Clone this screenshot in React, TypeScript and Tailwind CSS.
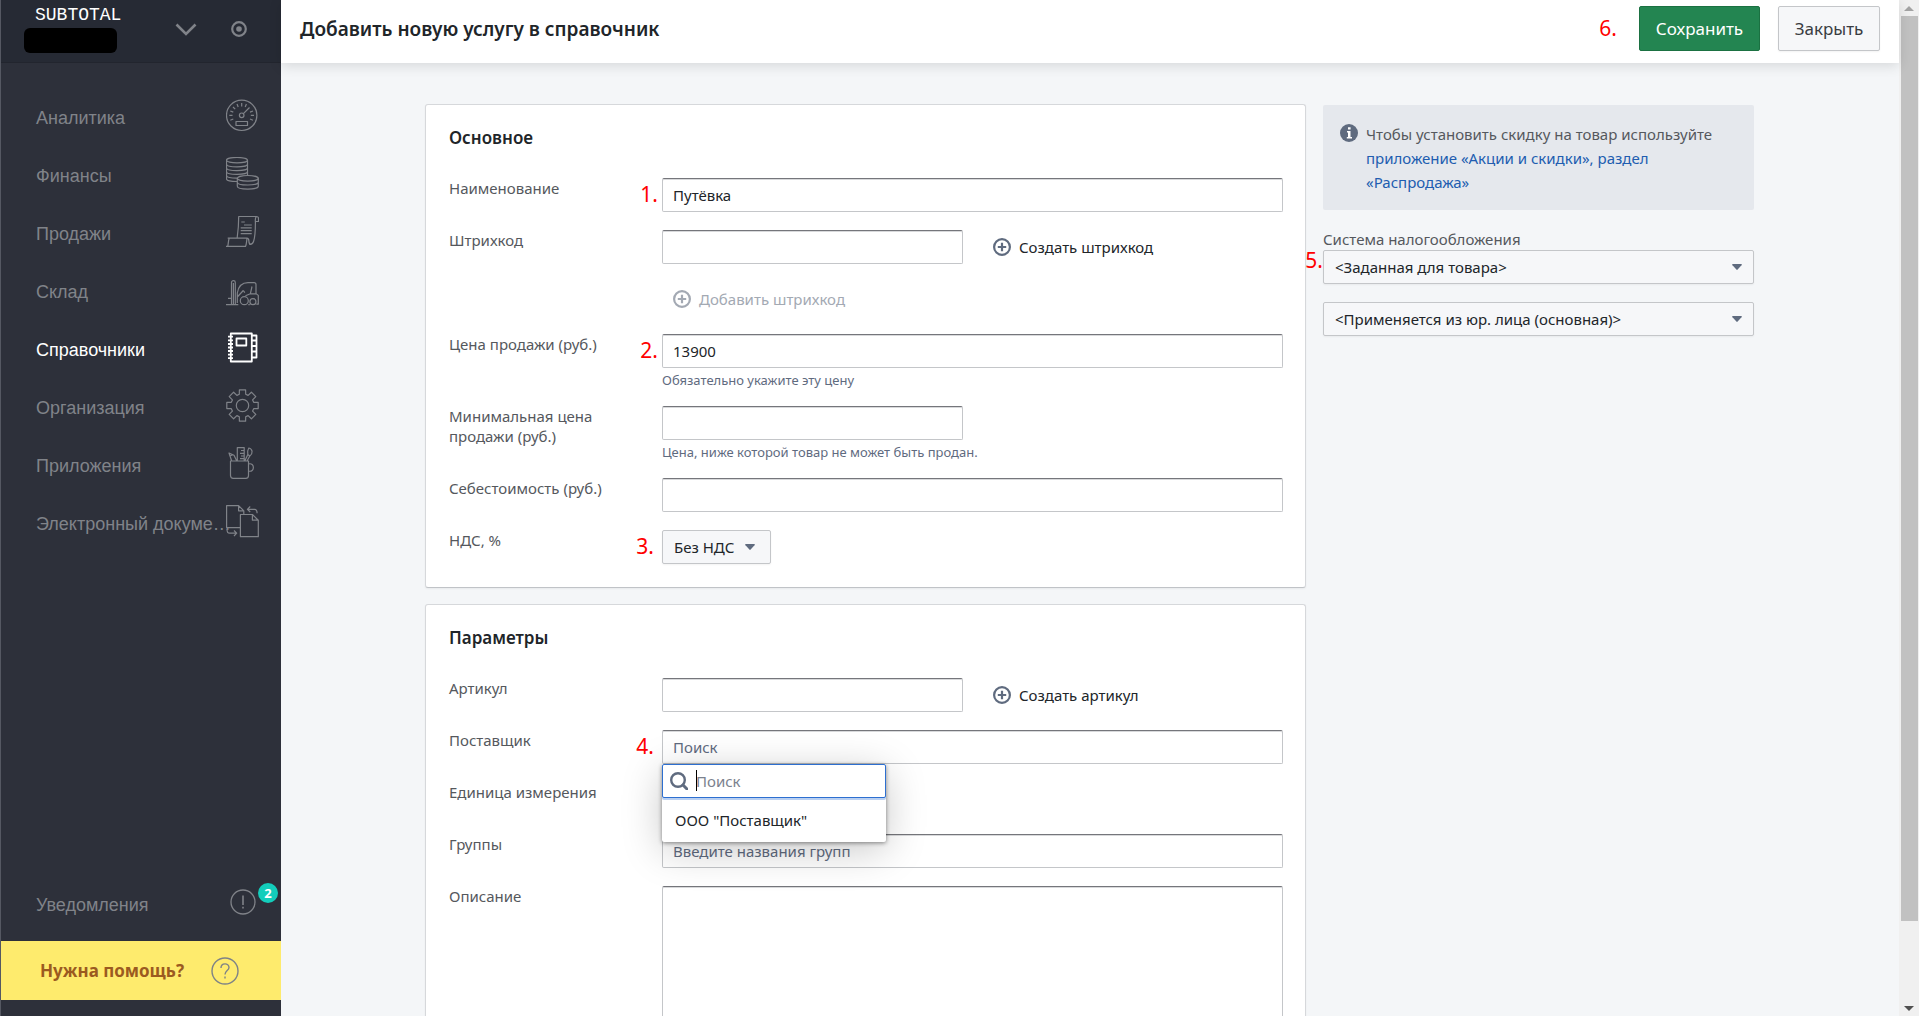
import { useState } from 'react';
import type { ReactNode } from 'react';
import clsx from 'clsx';

const gearPath =
  Array.from({ length: 8 }, (_, i) => i * 45)
    .flatMap((deg) => [
      [11.6, deg - 16],
      [16, deg - 11],
      [16, deg + 11],
      [11.6, deg + 16],
    ])
    .map(([r, deg], i) => {
      const a = (deg * Math.PI) / 180;
      return `${i ? 'L' : 'M'}${(16.5 + r * Math.sin(a)).toFixed(1)} ${(16.5 - r * Math.cos(a)).toFixed(1)}`;
    })
    .join('') + 'Z';

function NavIcon({ children, bold }: { children: ReactNode; bold?: boolean }) {
  return (
    <svg
      className="-ml-1.5 w-[33px] h-[33px] shrink-0"
      viewBox="0 0 33 33"
      fill="none"
      stroke="currentColor"
      strokeWidth={bold ? 1.8 : 1.2}
      strokeLinejoin="round"
    >
      {children}
    </svg>
  );
}

const navItems = [
  {
    title: 'Аналитика',
    icon: (
      <>
        <circle cx="15.7" cy="16.3" r="15.2" />
        <circle cx="15.7" cy="16.3" r="2.3" />
        <path d="M17.4 14.6L23.5 8.5M10 22.5h11.5v4H10zM15.7 4v3.4M11 5l1.2 3M20.4 5l-1.2 3M7 8l2.2 2.2M4.3 12l3 1.1M27 12l-3 1.1M3.3 16.3h3.2M28 16.3h-3.2M4.3 21.2l3-1.2M27 21.2l-3-1.2" />
      </>
    ),
  },
  {
    title: 'Финансы',
    icon: (
      <>
        <ellipse cx="11" cy="3.2" rx="10.5" ry="2.7" />
        <path d="M.5 3.2v18.6c0 1.6 4.5 2.7 10.5 2.7M21.5 3.2V18" />
        <path d="M.5 7.2c0 1.6 4.7 2.7 10.5 2.7s10.5-1.1 10.5-2.7M.5 11c0 1.6 4.7 2.7 10.5 2.7s10.5-1.1 10.5-2.7M.5 14.7c0 1.6 4.7 2.7 10.5 2.7s10.5-1.1 10.5-2.7M.5 18.4c0 1.6 4.7 2.7 10.5 2.7" />
        <ellipse cx="21.8" cy="21.3" rx="10.5" ry="2.8" />
        <path d="M11.3 21.3v8c0 1.7 4.7 2.8 10.5 2.8s10.5-1.1 10.5-2.8v-8M11.3 25.2c0 1.7 4.7 2.8 10.5 2.8s10.5-1.1 10.5-2.8" />
      </>
    ),
  },
  {
    title: 'Продажи',
    icon: (
      <path d="M11.2 22.5C12.3 15 12.7 9 12.7 1.5h17.8c1.4 0 2 .9 2 2v3h-3.2M30.5 1.500c-1.800 1-1.100 4-1.100 6.500 0 7-.2 13-1.700 18-.8 3-2.200 3.500-4.500 3.500M1.700 23.200h19.200c1.500 0 2 1.300 2 3s.2 3.300 2.500 3.300M3.200 23.200c-1 2.500-.8 6-1.500 8.200M0 31.400h19.500c1.200-2 .9-5.500 1.600-8.200M15.300 7h3.500M18 10h7.800M14.700 12.800h11M14.700 15.700h11M14.700 18.600h11" />
    ),
  },
  {
    title: 'Склад',
    icon: (
      <>
        <path d="M5.500 31.500V9.500c0-2.500 3.800-2.500 3.800 0v22M7.400 10v21M0 31.700h12.300M2 25.300h3.500M11.300 30V20C12.500 13 16 9.700 22 9.700h6c1.200 0 2 .7 2 1.900v9l2.300 1.800v8.800h-2M11.300 24l6-6.500M17.300 17.500l1.500 2.200M26 13.500l-1.600 7.200-5 2M24.400 20.800h5.800M22.300 31.700h1.500" />
        <circle cx="18.3" cy="27.7" r="4" />
        <circle cx="26.9" cy="28.7" r="3" />
      </>
    ),
  },
  {
    title: 'Справочники',
    active: true,
    icon: (
      <path d="M4.800 2.500h21v28h-21zM10.500 7.500h9.800v7h-9.800zM26 4.500h4.500v5H26M30.500 9.500v17H26M26 15h4.500M26 20.500h4.500M2 5.700h5M2 9.300h5M2 13h5M2 16.500h5M2 20h5M2 23.600h5M2 27.200h5" />
    ),
  },
  {
    title: 'Организация',
    icon: (
      <>
        <circle cx="16.5" cy="16.5" r="6.2" />
        <path d={gearPath} />
      </>
    ),
  },
  {
    title: 'Приложения',
    icon: (
      <path d="M4.500 14h18v14.500c0 1.700-1 2.800-2.700 2.800H7.200c-1.700 0-2.700-1.100-2.700-2.800zM22.500 17c6.500-2 6.500 9 0 7M11.300 14V.6h6.900V14M15 3.500h3M14 6.300h4M15 9h3M14 11.700h4M5.700 14L3 6l5 2.200 2.800 5.800M3.500 9.200l3.300-1.500M18.800 14l3-6.500M21 14l2.800-5M21.800 7.500c-.4-2.500-.3-4.500 1-6.500 4 1 4.400 5.500 1 8z" />
    ),
  },
  {
    title: 'Электронный докуме…',
    icon: (
      <path d="M14 22.600H.6V.6h12l5.200 5.200V9M12.600.6v5.200h5.200M14.400 9.500h12l5.900 5.700v16.500H14.400zM26.400 9.500v5.700h5.900M24.200 1.500l-2.800 2.800 2.800 2.700M21.400 4.300h7.200c1.700 0 2.500 1.200 2.500 4M1 24.200c0 2.500.6 4 2.500 4h7.200M8 25.500l2.700 2.700L8 31" />
    ),
  },
];

function PlusCircle() {
  return (
    <svg className="w-[18px] h-[18px]" viewBox="0 0 18 18" fill="none" stroke="currentColor" strokeWidth="2.2">
      <circle cx="9" cy="9" r="7.9" />
      <path d="M9 4.800v8.400M4.800 9h8.400" />
    </svg>
  );
}

const boxClass =
  'block w-full rounded-xs border border-[#c4c6c9] border-t-[#75767b] bg-white px-[10px] text-[15px] text-[#212529] placeholder:text-[#5f6b7f] shadow-[inset_0_1px_0_#d8d9db] outline-none';
const inputClass = clsx(boxClass, 'h-[34px]');

interface FieldProps {
  id: string;
  label: string;
  mark?: string;
  markClass?: string;
  hint?: string;
  children?: ReactNode;
}

function Field({ id, label, mark, markClass, hint, children }: FieldProps) {
  return (
    <div className="flex mb-[18px] min-h-[34px]">
      <label htmlFor={id} className="w-[213px] shrink-0 pr-10 text-[15px] leading-5 text-[#55585d]">
        {label}
      </label>
      <div className="relative flex-1 min-w-0">
        {mark && <Mark className={clsx('absolute right-full top-0.5', markClass)}>{mark}</Mark>}
        {children}
        {hint && <p className="h-5 pt-0.5 text-[13px] leading-5 text-[#5f6b7f] whitespace-nowrap">{hint}</p>}
      </div>
    </div>
  );
}

function Mark({ className, children }: { className?: string; children: ReactNode }) {
  return <span className={clsx('text-[21px] leading-7 text-[#ff0000]', className)}>{children}</span>;
}

interface SelectProps {
  id: string;
  label?: string;
  value: string;
  className?: string;
  arrowClass?: string;
}

function Select({ id, label, value, className, arrowClass = 'right-3' }: SelectProps) {
  return (
    <div className={clsx('relative', className)}>
      <select
        id={id}
        aria-label={label}
        className="block h-[34px] w-full appearance-none rounded-xs border border-[#c4c6c9] bg-[#f6f7f9] pl-[11px] pr-7 text-[15px] text-[#212529] shadow-xs"
      >
        <option>{value}</option>
      </select>
      <svg
        className={clsx('pointer-events-none absolute top-3.5 w-2.5 h-1.5', arrowClass)}
        viewBox="0 0 10 6"
        fill="#5f6b7f"
      >
        <path d="M1 0h8c.8 0 1 .6.500 1.200L5.600 5.600c-.4.400-.8.400-1.200 0L.5 1.200C0 .6.200 0 1 0z" />
      </svg>
    </div>
  );
}

function Card({ title, children }: { title: string; children: ReactNode }) {
  return (
    <section className="mb-4 rounded-[3px] border border-[#d6d8db] border-b-[#c0c3c7] bg-white pl-[23px] pr-[22px] pt-[21px] pb-[5px] shadow-xs">
      <h2 className="mb-7 text-[17px] leading-6 font-semibold text-[#212529]">{title}</h2>
      {children}
    </section>
  );
}

function CreateButton({ children }: { children: ReactNode }) {
  return (
    <button type="button" className="ml-[30px] flex shrink-0 items-center gap-2 text-[15px]">
      <span className="text-[#5f6b7f]">
        <PlusCircle />
      </span>
      {children}
    </button>
  );
}

function Sidebar() {
  return (
    <aside className="flex w-[281px] shrink-0 flex-col border-l border-[#555862] bg-[#2d303a] text-[#808389]">
      <div className="flex h-[63px] shrink-0 items-center border-b border-[#22252e] bg-[#262a34] pb-1 pl-[23px]">
        <div className="w-[93px] self-start pt-1.5">
          <div className="pl-[11px] font-['Liberation_Mono',monospace] text-lg leading-[18px] text-white">SUBTOTAL</div>
          <div className="mt-1 h-[25px] rounded-md bg-black" />
        </div>
        <button type="button" aria-label="Выбрать компанию" className="ml-[58px]">
          <svg className="w-[22px] h-[13px]" viewBox="0 0 22 13" fill="none" stroke="currentColor" strokeWidth="2.6">
            <path d="M1.500 1.500L11 11l9.500-9.500" />
          </svg>
        </button>
        <button type="button" aria-label="Статус" className="ml-[34px]">
          <svg className="w-4 h-4" viewBox="0 0 16 16" fill="none" stroke="currentColor" strokeWidth="2.2">
            <circle cx="8" cy="8" r="6.8" />
            <circle cx="8" cy="8" r="2.8" fill="currentColor" stroke="none" />
          </svg>
        </button>
      </div>

      <nav className="pt-[23px] font-['Liberation_Sans',Arial,sans-serif] text-lg">
        {navItems.map((item) => (
          <a
            key={item.title}
            href="#"
            className={clsx('flex h-[58px] items-center pl-[35px]', item.active && 'text-white')}
          >
            <span className="w-[196px] shrink-0 whitespace-nowrap pt-1.5">{item.title}</span>
            <NavIcon bold={item.active}>{item.icon}</NavIcon>
          </a>
        ))}
      </nav>

      <a
        href="#"
        className="mt-auto mb-[10px] flex h-[58px] shrink-0 items-center pl-[35px] font-['Liberation_Sans',Arial,sans-serif] text-lg"
      >
        <span className="w-[194px] shrink-0 pt-1.5">Уведомления</span>
        <span className="relative">
          <svg className="w-[26px] h-[26px]" viewBox="0 0 26 26" fill="none" stroke="currentColor" strokeWidth="1.3">
            <circle cx="13" cy="13" r="12" />
            <path d="M13 6.500v9.500M13 17.800v1.800" strokeWidth="1.6" />
          </svg>
          <span className="absolute left-[28px] -top-1.5 flex h-5 w-5 items-center justify-center rounded-full bg-[#13cdbb] font-['Noto_Sans',sans-serif] text-[13px] font-bold text-white">
            2
          </span>
        </span>
      </a>
      <a href="#" className="mb-4 flex h-[59px] shrink-0 items-center bg-[#feeb6d] pl-[39px] text-[#9b5a20]">
        <span className="w-[171px] text-[17px] font-bold">Нужна помощь?</span>
        <svg className="w-7 h-7" viewBox="0 0 28 28" fill="none" stroke="#7f8386" strokeWidth="1.4">
          <circle cx="14" cy="14" r="13" />
          <path d="M10 11c0-5.500 8-5.300 8-.6 0 3.100-4 3.200-4 7.100M14 19.500v2" />
        </svg>
      </a>
    </aside>
  );
}

function Scrollbar() {
  return (
    <div className="flex w-5 shrink-0 flex-col items-center bg-[#f0f0f0]" aria-hidden="true">
      <div className="flex h-4 items-center">
        <div className="border-x-[5px] border-b-[5px] border-x-transparent border-b-[#a3a3a3]" />
      </div>
      <div className="flex-1 w-full">
        <div className="mx-auto h-[92%] w-[17px] bg-[#c1c1c1]" />
      </div>
      <div className="flex h-4 items-center">
        <div className="border-x-[5px] border-t-[5px] border-x-transparent border-t-[#505050]" />
      </div>
    </div>
  );
}

export default function App() {
  const [name, setName] = useState('Путёвка');
  const [price, setPrice] = useState('13900');

  return (
    <div className="flex h-screen overflow-hidden bg-[#f4f6f8] font-['Noto_Sans',sans-serif] text-[#212529]">
      <Sidebar />

      <div className="flex flex-1 min-w-0 flex-col">
        <header className="relative flex h-[63px] shrink-0 items-start bg-white px-[19px] pt-1.5 shadow-[0_3px_12px_rgba(0,0,0,0.12)]">
          <h1 className="flex-1 text-[19px] leading-[46px] font-semibold">Добавить новую услугу в справочник</h1>
          <Mark className="mr-[22px] pt-2">6.</Mark>
          <button
            type="button"
            className="mr-[18px] h-[45px] w-[121px] rounded-xs border border-[#1b7142] bg-[#238551] text-[17px] text-white"
          >
            Сохранить
          </button>
          <button
            type="button"
            className="h-[45px] w-[102px] rounded-xs border border-[#c4c6c9] bg-[#f6f7f9] text-[17px] text-[#3a3d42] shadow-xs"
          >
            Закрыть
          </button>
        </header>

        <main className="min-h-0 flex-1 overflow-hidden pl-6 pr-[25px] pt-[41px]">
          <div className="mx-auto flex max-w-[1329px] gap-[17px]">
            <form className="flex-1 min-w-0">
              <Card title="Основное">
                <Field id="name" label="Наименование" mark="1." markClass="mr-1">
                  <input id="name" className={inputClass} value={name} onChange={(e) => setName(e.target.value)} />
                </Field>
                <Field id="barcode" label="Штрихкод">
                  <div className="flex items-center">
                    <input id="barcode" className={clsx(inputClass, 'max-w-[301px]')} />
                    <CreateButton>Создать штрихкод</CreateButton>
                  </div>
                  <button
                    type="button"
                    disabled
                    className="mt-[18px] ml-[11px] flex h-[34px] items-center gap-2 text-[15px] text-[#a3a9b3]"
                  >
                    <PlusCircle />
                    Добавить штрихкод
                  </button>
                </Field>
                <Field id="price" label="Цена продажи (руб.)" mark="2." markClass="mr-1" hint="Обязательно укажите эту цену">
                  <input id="price" className={inputClass} value={price} onChange={(e) => setPrice(e.target.value)} />
                </Field>
                <Field
                  id="min-price"
                  label="Минимальная цена продажи (руб.)"
                  hint="Цена, ниже которой товар не может быть продан."
                >
                  <input id="min-price" className={clsx(inputClass, 'max-w-[301px]')} />
                </Field>
                <Field id="cost" label="Себестоимость (руб.)">
                  <input id="cost" className={inputClass} />
                </Field>
                <Field id="vat" label="НДС, %" mark="3." markClass="mr-2">
                  <Select id="vat" value="Без НДС" className="w-[109px]" arrowClass="right-4" />
                </Field>
              </Card>

              <Card title="Параметры">
                <Field id="sku" label="Артикул">
                  <div className="flex items-center">
                    <input id="sku" className={clsx(inputClass, 'max-w-[301px]')} />
                    <CreateButton>Создать артикул</CreateButton>
                  </div>
                </Field>
                <Field id="supplier" label="Поставщик" mark="4." markClass="mr-2">
                  <input id="supplier" className={inputClass} placeholder="Поиск" />
                  <div className="absolute left-0 top-full z-10 w-56 rounded-xs bg-white shadow-[0_1px_4px_rgba(0,0,0,0.45),0_8px_40px_rgba(0,0,0,0.22)]">
                    <div className="relative">
                      <svg
                        className="absolute left-2 top-2 w-[18px] h-[18px]"
                        viewBox="0 0 18 18"
                        fill="none"
                        stroke="#5f6b7f"
                        strokeWidth="2.4"
                      >
                        <circle cx="8" cy="8" r="6.8" />
                        <path d="M13 13l4 4" strokeWidth="3" strokeLinecap="round" />
                      </svg>
                      <input
                        aria-label="Поиск поставщика"
                        placeholder="Поиск"
                        className="block h-[34px] w-full rounded-xs border border-[#2d6fd0] bg-white pl-[33px] text-[15px] placeholder:text-[#7b828e] shadow-[0_2px_0_#b9d0f2] outline-none"
                      />
                      <span className="absolute left-[34px] top-1.5 h-[21px] w-px bg-black" />
                    </div>
                    <button type="button" className="block h-11 w-full pl-[13px] text-left text-[15px]">
                      ООО "Поставщик"
                    </button>
                  </div>
                </Field>
                <Field id="unit" label="Единица измерения" />
                <Field id="groups" label="Группы">
                  <input id="groups" className={inputClass} placeholder="Введите названия групп" />
                </Field>
                <Field id="description" label="Описание">
                  <textarea id="description" className={clsx(boxClass, 'h-60 resize-none py-2')} />
                </Field>
              </Card>
            </form>

            <div className="w-[431px] shrink-0 pt-px">
              <div className="flex rounded-xs bg-[#e5e8ed] pt-[17px] pb-4 pl-[17px] pr-4">
                <svg className="mt-0.5 mr-2 w-[18px] h-[18px] shrink-0" viewBox="0 0 18 18">
                  <circle cx="9" cy="9" r="9" fill="#5f6b7f" />
                  <path d="M8 3.200h2.600v2.200H8zM7 7h3.500v6H12v1.400H6.800V13H8V8.400H7z" fill="#fff" />
                </svg>
                <p className="text-[15px] leading-6 text-[#55585d]">
                  Чтобы установить скидку на товар используйте{' '}
                  <a href="#" className="text-[#215db0]">
                    приложение «Акции и скидки», раздел «Распродажа»
                  </a>
                </p>
              </div>
              <label htmlFor="tax" className="mt-[19px] mb-px block text-[15px] leading-5 text-[#55585d]">
                Система налогообложения
              </label>
              <div className="relative mb-[18px]">
                <Mark className="absolute right-full -top-1">5.</Mark>
                <Select id="tax" value="<Заданная для товара>" />
              </div>
              <Select id="tax-entity" label="Юр. лицо" value="<Применяется из юр. лица (основная)>" />
            </div>
          </div>
        </main>
      </div>

      <Scrollbar />
    </div>
  );
}
